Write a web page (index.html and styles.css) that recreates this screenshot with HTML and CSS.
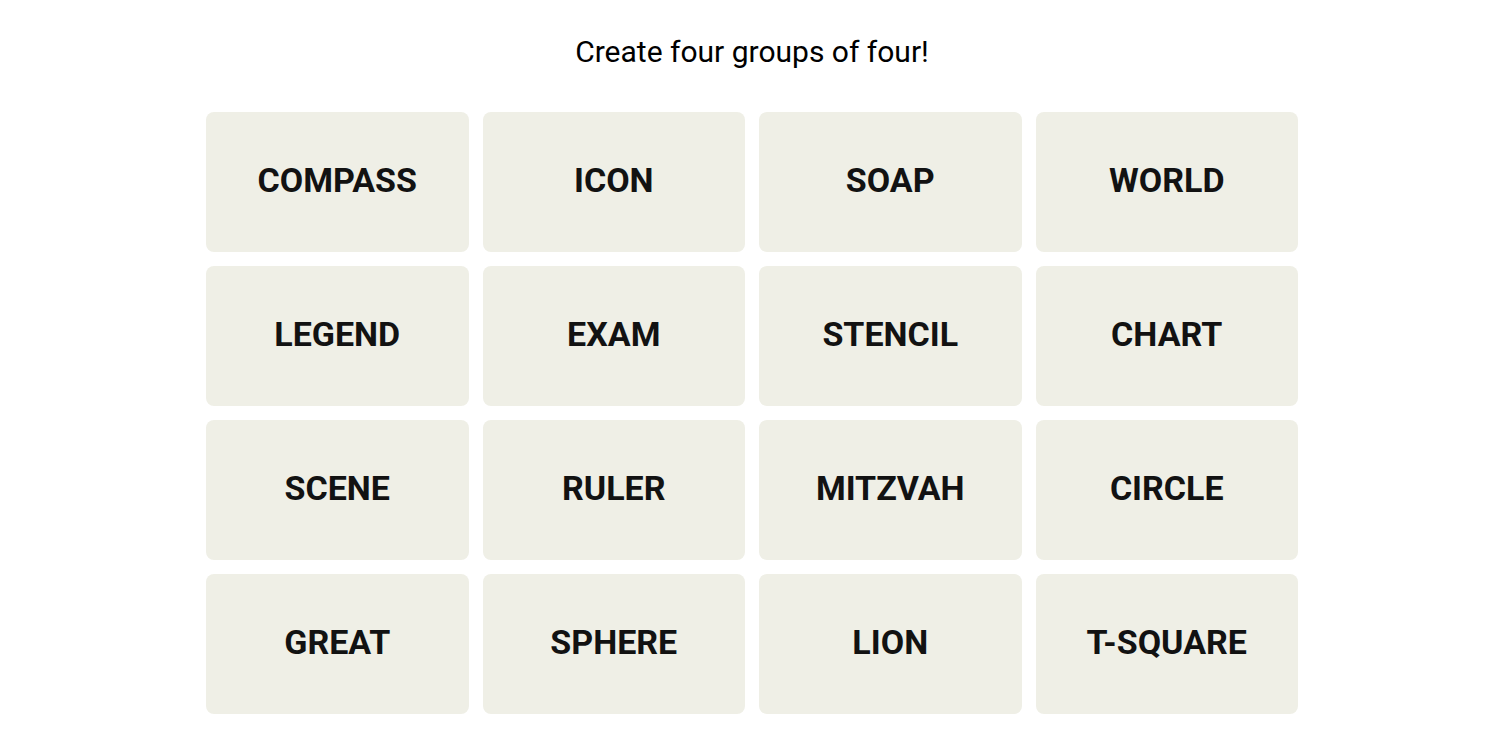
FILE: index.html
```html
<!DOCTYPE html>
<html lang="en">
<head>
<meta charset="utf-8">
<title>Connections</title>
<link rel="stylesheet" href="styles.css">
</head>
<body>
<main class="game">
  <h2 class="prompt">Create four groups of four!</h2>
  <div class="board">
    <button class="tile">COMPASS</button>
    <button class="tile">ICON</button>
    <button class="tile">SOAP</button>
    <button class="tile">WORLD</button>
    <button class="tile">LEGEND</button>
    <button class="tile">EXAM</button>
    <button class="tile">STENCIL</button>
    <button class="tile">CHART</button>
    <button class="tile">SCENE</button>
    <button class="tile">RULER</button>
    <button class="tile">MITZVAH</button>
    <button class="tile">CIRCLE</button>
    <button class="tile">GREAT</button>
    <button class="tile">SPHERE</button>
    <button class="tile">LION</button>
    <button class="tile">T-SQUARE</button>
  </div>
</main>
</body>
</html>
```

FILE: styles.css
```css
html, body {
  margin: 0;
  padding: 0;
  background: #ffffff;
}
body {
  font-family: "Roboto", "Liberation Sans", sans-serif;
  color: #121212;
}
.game {
  width: 1092px;
  margin: 0 auto;
  padding-left: 4px;
  padding-top: 31px;
}
.prompt {
  margin: 0 0 39px;
  font-weight: 400;
  font-size: 30px;
  line-height: 42px;
  text-align: center;
  color: #000;
}
.board {
  display: grid;
  grid-template-columns: repeat(4, 1fr);
  grid-auto-rows: 140px;
  gap: 14px;
}
.tile {
  border: none;
  border-radius: 8px;
  background: #efefe6;
  font-family: "Roboto", "Liberation Sans", sans-serif;
  font-weight: 700;
  font-size: 34px;
  color: #121212;
  display: flex;
  align-items: center;
  justify-content: center;
  padding: 0 0 4px;
}
```
